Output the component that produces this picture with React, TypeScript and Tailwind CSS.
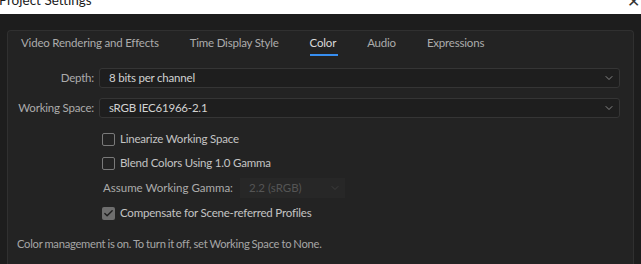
import { ChevronDown, Check } from 'lucide-react'

const font = { fontFamily: 'Lato, "Noto Sans", sans-serif' }

function Select({ value, className = '' }: { value: string; className?: string }) {
  return (
    <div className={`flex items-center justify-between h-[20px] rounded-[3px] border border-[#353535] bg-[#1e1e1e] pl-[9px] pr-[4px] ${className}`}>
      <span className="text-[11.5px] tracking-[-0.2px] text-[#d2d2d2] leading-none">{value}</span>
      <ChevronDown className="w-[12px] h-[12px] text-[#a8a8a8]" strokeWidth={1.5} />
    </div>
  )
}

function CheckRow({ label, checked = false }: { label: string; checked?: boolean }) {
  return (
    <div className="flex items-center h-[24px]">
      <div
        className={`w-[13px] h-[13px] rounded-[2px] flex items-center justify-center ${
          checked ? 'bg-[#6e6e6e]' : 'border border-[#7a7a7a]'
        }`}
      >
        {checked && <Check className="w-[11px] h-[11px] text-[#1d1d1d]" strokeWidth={3} />}
      </div>
      <span className="ml-[5px] text-[11.5px] tracking-[-0.2px] text-[#c4c4c4] leading-none whitespace-nowrap">{label}</span>
    </div>
  )
}

export default function App() {
  const tabs = ['Video Rendering and Effects', 'Time Display Style', 'Color', 'Audio', 'Expressions']
  return (
    <div className="w-[641px] h-[264px] overflow-hidden bg-[#1d1d1d]" style={font}>
      {/* title bar, mostly scrolled off */}
      <div className="relative h-[14px] bg-white overflow-hidden">
        <span className="absolute left-[-1px] top-[-10px] text-[13.5px] text-[#1a1a1a]">Project Settings</span>
        <span className="absolute right-[1px] top-[-11px] text-[16px] text-[#333]">✕</span>
      </div>

      <div className="pt-[16px] pl-[7px] pr-[7px]">
        <div className="rounded-t-[4px] border border-b-0 border-[#303030] bg-[#232323] h-[240px]">
          {/* tabs */}
          <div className="flex pl-[13px] h-[25px] items-end">
            {tabs.map((t, i) => (
              <div key={t} className={`relative pb-[3px] ${i > 0 ? 'ml-[31px]' : ''}`}>
                <span className={`text-[11.5px] tracking-[-0.2px] leading-none whitespace-nowrap ${t === 'Color' ? 'text-[#dadada]' : 'text-[#acacac]'}`}>{t}</span>
                {t === 'Color' && <div className="absolute left-0 right-[-2px] bottom-0 h-[2px] bg-[#378ef0]" />}
              </div>
            ))}
          </div>

          <div className="pt-[12px] pr-[13px]">
            <div className="flex items-center">
              <span className="w-[86px] text-right text-[11.5px] tracking-[-0.2px] text-[#ababab] whitespace-nowrap">Depth:</span>
              <Select value="8 bits per channel" className="ml-[5px] flex-1" />
            </div>
            <div className="flex items-center mt-[10px]">
              <span className="w-[86px] text-right text-[11.5px] tracking-[-0.2px] text-[#ababab] whitespace-nowrap">Working Space:</span>
              <Select value="sRGB IEC61966-2.1" className="ml-[5px] flex-1" />
            </div>

            <div className="pl-[94px] mt-[9px]">
              <CheckRow label="Linearize Working Space" />
              <CheckRow label="Blend Colors Using 1.0 Gamma" />
              <div className="flex items-center h-[26px]">
                <span className="pl-[1px] text-[11.5px] text-[#ababab] whitespace-nowrap">Assume Working Gamma:</span>
                <div className="ml-[7px] w-[105px] h-[20px] flex items-center justify-between bg-[#272727] pl-[9px] pr-[4px]">
                  <span className="text-[11.5px] text-[#555]">2.2 (sRGB)</span>
                  <ChevronDown className="w-[12px] h-[12px] text-[#444]" strokeWidth={1.5} />
                </div>
              </div>
              <CheckRow label="Compensate for Scene-referred Profiles" checked />
            </div>
          </div>

          <div className="pl-[9px] mt-[11px] text-[11.2px] tracking-[-0.25px] [word-spacing:-0.5px] text-[#a6a6a6] whitespace-nowrap">
            Color management is on. To turn it off, set Working Space to None.
          </div>
        </div>
      </div>
    </div>
  )
}
